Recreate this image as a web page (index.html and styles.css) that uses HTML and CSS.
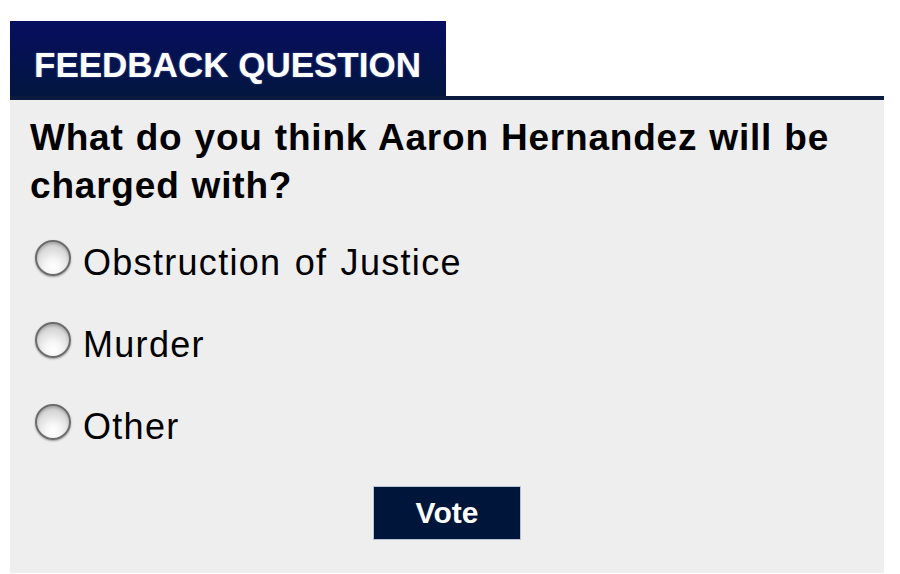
FILE: index.html
```html
<!DOCTYPE html>
<html lang="en">
  <head>
    <meta charset="UTF-8" />
    <meta name="viewport" content="width=device-width, initial-scale=1.0" />
    <title>Feedback Question</title>
    <link rel="stylesheet" href="styles.css">
  </head>
  <body>
    <div class="poll">
      <div class="poll-header">
        <h2 class="poll-tab">FEEDBACK QUESTION</h2>
      </div>

      <form class="poll-body" onsubmit="event.preventDefault()">
        <p class="question">What do you think Aaron Hernandez will be charged with?</p>

        <div class="options">
          <label class="option">
            <input type="radio" name="answer" value="obstruction" />
            <span>Obstruction of Justice</span>
          </label>
          <label class="option">
            <input type="radio" name="answer" value="murder" />
            <span>Murder</span>
          </label>
          <label class="option">
            <input type="radio" name="answer" value="other" />
            <span>Other</span>
          </label>
        </div>

        <div class="actions">
          <button type="submit" class="vote-btn">Vote</button>
        </div>
      </form>
    </div>
  </body>
</html>
```

FILE: styles.css
```css
body {
  font-family: "Liberation Sans", Arial, Helvetica, sans-serif;
  margin: 0;
  padding: 21px 16px 0 10px;
  background-color: white;
  overflow: hidden;
}
.poll {
  width: 874px;
}
.poll-header {
  display: flex;
  border-bottom: 4px solid #0b1a3e;
}
.poll-tab {
  margin: 0;
  padding: 24px 25px 12px 24px;
  background: linear-gradient(#070e60, #02163f);
  color: white;
  font-size: 35px;
  line-height: 39px;
  font-weight: bold;
  text-shadow: 0 0 2px rgba(160, 180, 255, 0.5);
}
.poll-body {
  background-color: #eeeeee;
  padding: 14px 20px 33px 20px;
  margin: 0;
}
.question {
  margin: 0;
  font-size: 37px;
  line-height: 48px;
  font-weight: bold;
  letter-spacing: 0.8px;
  word-spacing: 1px;
  color: #000;
}
.options {
  display: flex;
  flex-direction: column;
  gap: 40px;
  margin-top: 32px;
  padding-left: 5px;
}
.option {
  display: flex;
  align-items: flex-start;
  gap: 12px;
  font-size: 36px;
  line-height: 42px;
  letter-spacing: 1.3px;
  word-spacing: 2px;
  color: #000;
  cursor: pointer;
}
.option input[type="radio"] {
  appearance: none;
  -webkit-appearance: none;
  flex: none;
  width: 36px;
  height: 36px;
  margin: -2px 0 0 0;
  border-radius: 50%;
  border: 2px solid #6b6b6b;
  box-sizing: border-box;
  background: radial-gradient(circle at 50% 78%, #ffffff 0, #f6f6f6 25%, #dcdcdc 60%, #c4c4c4 100%);
  box-shadow: 0 1px 2px rgba(0, 0, 0, 0.35), inset 0 2px 3px rgba(0, 0, 0, 0.2);
}
.option input[type="radio"]:checked {
  background: radial-gradient(circle, #1d2a5a 0, #1d2a5a 30%, #dcdcdc 34%, #c4c4c4 100%);
}
.actions {
  display: flex;
  justify-content: center;
  margin-top: 38px;
}
.vote-btn {
  width: 148px;
  height: 54px;
  border: 1px solid #b8c2d3;
  background-color: #00153a;
  color: white;
  font-family: inherit;
  font-size: 30px;
  font-weight: bold;
  cursor: pointer;
}
.vote-btn:hover {
  background-color: #0a2558;
}
```
